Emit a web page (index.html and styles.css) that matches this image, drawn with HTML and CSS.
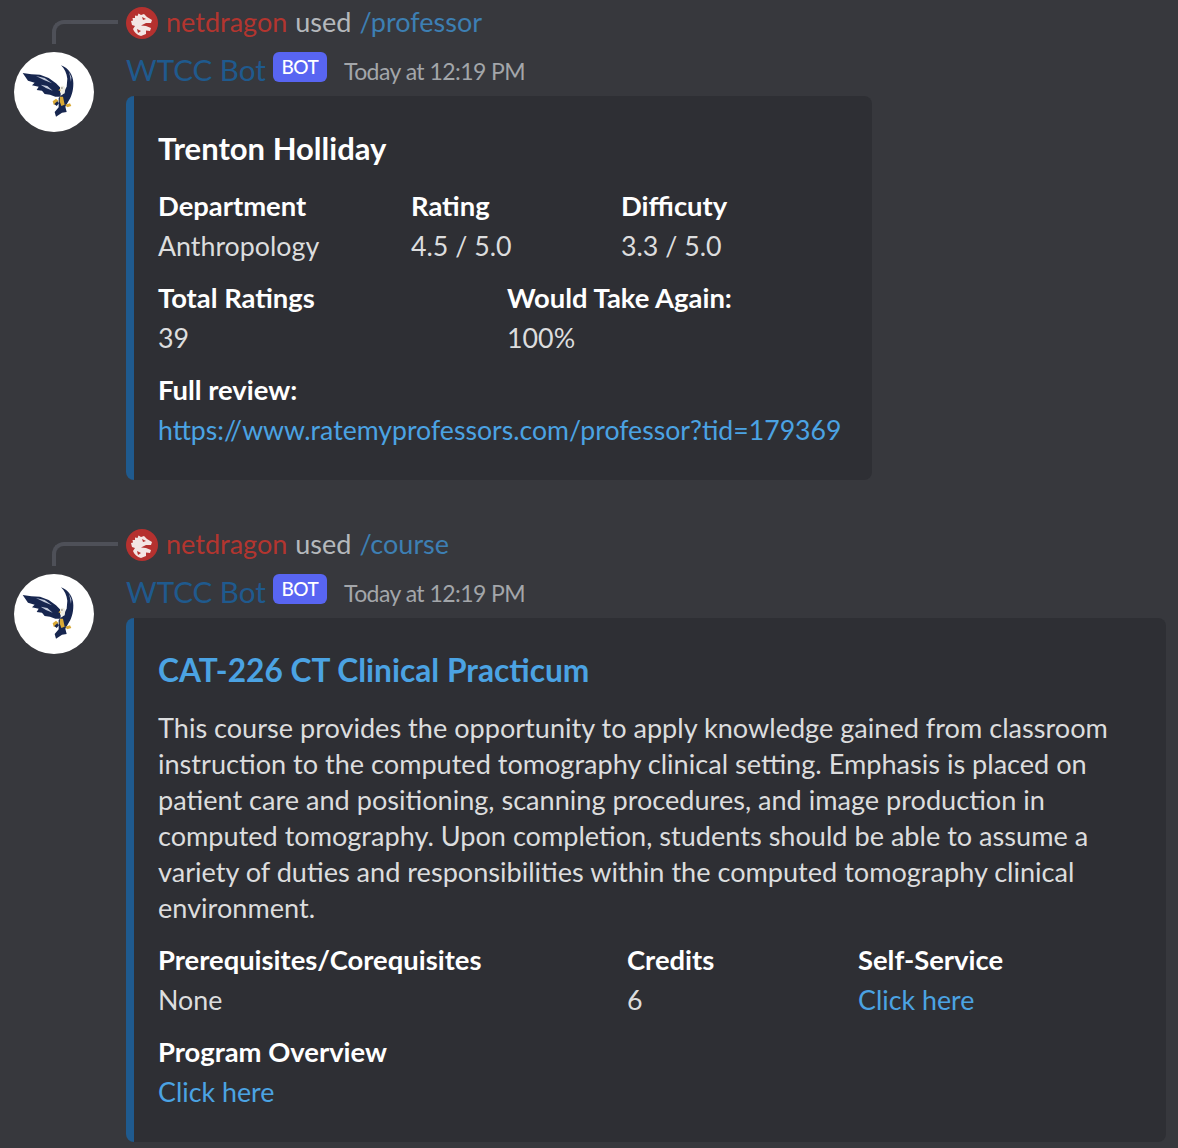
FILE: index.html
```html
<!DOCTYPE html>
<html lang="en">
<head>
<meta charset="utf-8">
<title>WTCC Bot</title>
<link rel="stylesheet" href="styles.css">
</head>
<body>
<svg class="defs" width="0" height="0" aria-hidden="true">
  <symbol id="eagle" viewBox="12 12 240 240">
    <circle cx="132" cy="132" r="120" fill="#fff"/>
    <path fill="#17264f" d="M38 75 L64 79 L90 80 L116 90 L138 106 L152 120 L152 146 L136 146 L120 140 L104 138 L96 128 L80 126 L86 116 L66 112 L74 104 L54 98 Z"/>
    <path fill="#17264f" d="M153 52 C176 60 190 82 190 106 C190 130 184 148 174 162 L166 176 L170 192 L156 194 L138 206 L134 192 L146 178 L146 150 L158 138 L170 116 L172 92 C170 76 164 62 153 52 Z"/>
    <path fill="#c3cadb" d="M78 84 L104 90 L126 106 L102 96 Z M92 110 L112 114 L128 128 L108 120 Z M176 70 L184 88 L183 102 L180 84 Z"/>
    <path fill="#f2f0e6" d="M150 118 C155 110 165 112 166 122 L164 136 L156 140 L150 132 Z"/>
    <path fill="#26231c" d="M153 120 L157 118 L157 122 Z"/>
    <path fill="#d9a935" d="M150 122 L145 127 L152 130 Z M150 146 L159 146 L164 170 L154 174 L149 160 Z M128 160 L138 152 L145 158 L138 170 L131 170 Z M166 170 L180 166 L184 174 L171 178 Z"/>
    <path fill="#17264f" d="M133 168 L142 160 L147 166 L140 174 Z"/>
  </symbol>
  <symbol id="dragon" viewBox="0 0 32 32">
    <circle cx="16" cy="16" r="16" fill="#b5312f"/>
    <path fill="#f3e6e4" d="M5 14 L7 13.5 L6.5 11 L9 11 L9 8.5 L11.5 9 L12.5 6.5 L15 8 L18 7 L21 10 L26 13 L25 16 L20 16 L15 18.5 L20 19 L25 21 L24 24 L20 23.5 L20 27 L15 29 C11 28 8 25 7 22 L9 19 L6 18 Z"/>
    <path fill="#b5312f" d="M16 10 L20 12 L17 13 Z M11 22 L15 24 L12 26 Z"/>
  </symbol>
</svg>

<main class="chat">
  <article class="message">
    <div class="spine"></div>
    <div class="reply">
      <svg class="reply-icon"><use href="#dragon"/></svg>
      <span class="user">netdragon</span>
      <span class="used">used</span>
      <span class="command">/professor</span>
    </div>
    <svg class="avatar"><use href="#eagle"/></svg>
    <div class="content">
      <header class="head">
        <span class="name">WTCC Bot</span>
        <span class="badge">BOT</span>
        <time class="time">Today at 12:19 PM</time>
      </header>
      <section class="embed embed-small">
        <h2 class="title">Trenton Holliday</h2>
        <div class="fields cols-prof-a">
          <div class="field"><div class="label">Department</div><div class="value">Anthropology</div></div>
          <div class="field"><div class="label">Rating</div><div class="value">4.5 / 5.0</div></div>
          <div class="field"><div class="label">Difficuty</div><div class="value">3.3 / 5.0</div></div>
        </div>
        <div class="fields cols-prof-b">
          <div class="field"><div class="label">Total Ratings</div><div class="value">39</div></div>
          <div class="field"><div class="label">Would Take Again:</div><div class="value">100%</div></div>
        </div>
        <div class="fields">
          <div class="field"><div class="label">Full review:</div><div class="value"><a class="link link-url" href="#">https://www.ratemyprofessors.com/professor?tid=179369</a></div></div>
        </div>
      </section>
    </div>
  </article>

  <article class="message">
    <div class="spine"></div>
    <div class="reply">
      <svg class="reply-icon"><use href="#dragon"/></svg>
      <span class="user">netdragon</span>
      <span class="used">used</span>
      <span class="command">/course</span>
    </div>
    <svg class="avatar"><use href="#eagle"/></svg>
    <div class="content">
      <header class="head">
        <span class="name">WTCC Bot</span>
        <span class="badge">BOT</span>
        <time class="time">Today at 12:19 PM</time>
      </header>
      <section class="embed embed-wide">
        <h2 class="title title-link">CAT-226 CT Clinical Practicum</h2>
        <p class="desc">This course provides the opportunity to apply knowledge gained from classroom<br>instruction to the computed tomography clinical setting. Emphasis is placed on<br>patient care and positioning, scanning procedures, and image production in<br>computed tomography. Upon completion, students should be able to assume a<br>variety of duties and responsibilities within the computed tomography clinical<br>environment.</p>
        <div class="fields cols-course">
          <div class="field"><div class="label">Prerequisites/Corequisites</div><div class="value">None</div></div>
          <div class="field"><div class="label">Credits</div><div class="value">6</div></div>
          <div class="field"><div class="label">Self-Service</div><div class="value"><a class="link" href="#">Click here</a></div></div>
        </div>
        <div class="fields">
          <div class="field"><div class="label">Program Overview</div><div class="value"><a class="link" href="#">Click here</a></div></div>
        </div>
      </section>
    </div>
  </article>
</main>
</body>
</html>
```
FILE: styles.css
```css
* { box-sizing: border-box; }
html, body { margin: 0; padding: 0; }
body {
  background: #37383d;
  color: #dcddde;
  font-family: "Lato", "Noto Sans", sans-serif;
  height: 1148px;
  overflow: hidden;
}
.defs { display: block; height: 0; }
.chat { display: flex; flex-direction: column; gap: 42px; }
.message {
  display: grid;
  grid-template-columns: 80px 1fr;
  grid-template-rows: 52px auto;
  column-gap: 32px;
  padding: 0 12px 0 14px;
}
.spine {
  width: 66px;
  height: 24px;
  margin-left: 38px;
  align-self: end;
  margin-bottom: 8px;
  border-left: 4px solid #4e5058;
  border-top: 4px solid #4e5058;
  border-top-left-radius: 12px;
}
.reply {
  display: flex;
  align-items: center;
  height: 46px;
  padding-bottom: 4px;
  font-size: 27px;
  gap: 8px;
}
.reply-icon { width: 32px; height: 32px; margin-top: 3px; }
.user { color: #b3352f; }
.used { color: #b5b8bc; }
.command { color: #3d7fb3; }
.avatar { width: 80px; height: 80px; }
.head { display: flex; align-items: center; height: 44px; }
.name { color: #1f5a8e; font-size: 29.6px; margin-top: -10px; }
.badge {
  background: #5865f2;
  color: #fff;
  font-size: 19px;
  letter-spacing: -0.5px;
  font-weight: 500;
  border-radius: 6px;
  height: 30px;
  width: 54px;
  text-align: center;
  line-height: 30px;
  margin: -14px 0 0 7px;
}
.time { color: #a3a6aa; font-size: 23px; letter-spacing: -0.55px; margin-left: 17px; margin-top: -6px; }
.embed {
  background: #2e2f34;
  border-left: 8px solid #1f5a8e;
  border-radius: 8px;
  padding: 30px 24px 30px 24px;
}
.embed-small { width: 746px; }
.embed-wide { width: 1040px; }
.title {
  margin: 0 0 16px;
  font-size: 31px;
  line-height: 44px;
  font-weight: 700;
  color: #fff;
}
.title-link { color: #4ba3e3; font-size: 31.7px; margin-bottom: 18px; }
.desc {
  margin: 0 0 14px;
  font-size: 27.1px;
  line-height: 36px;
  color: #dcddde;
  white-space: nowrap;
}
.fields { display: grid; margin-bottom: 12px; }
.fields:last-child { margin-bottom: 0; }
.cols-prof-a { grid-template-columns: 253px 210px 1fr; }
.cols-prof-b { grid-template-columns: 349px 1fr; }
.cols-course { grid-template-columns: 469px 231px 1fr; }
.label { font-size: 27.4px; line-height: 40px; font-weight: 700; color: #fff; }
.value { font-size: 26.8px; line-height: 40px; color: #dcddde; white-space: nowrap; }
.link { color: #4ba3e3; text-decoration: none; }
.link-url { font-size: 26.65px; }
```
